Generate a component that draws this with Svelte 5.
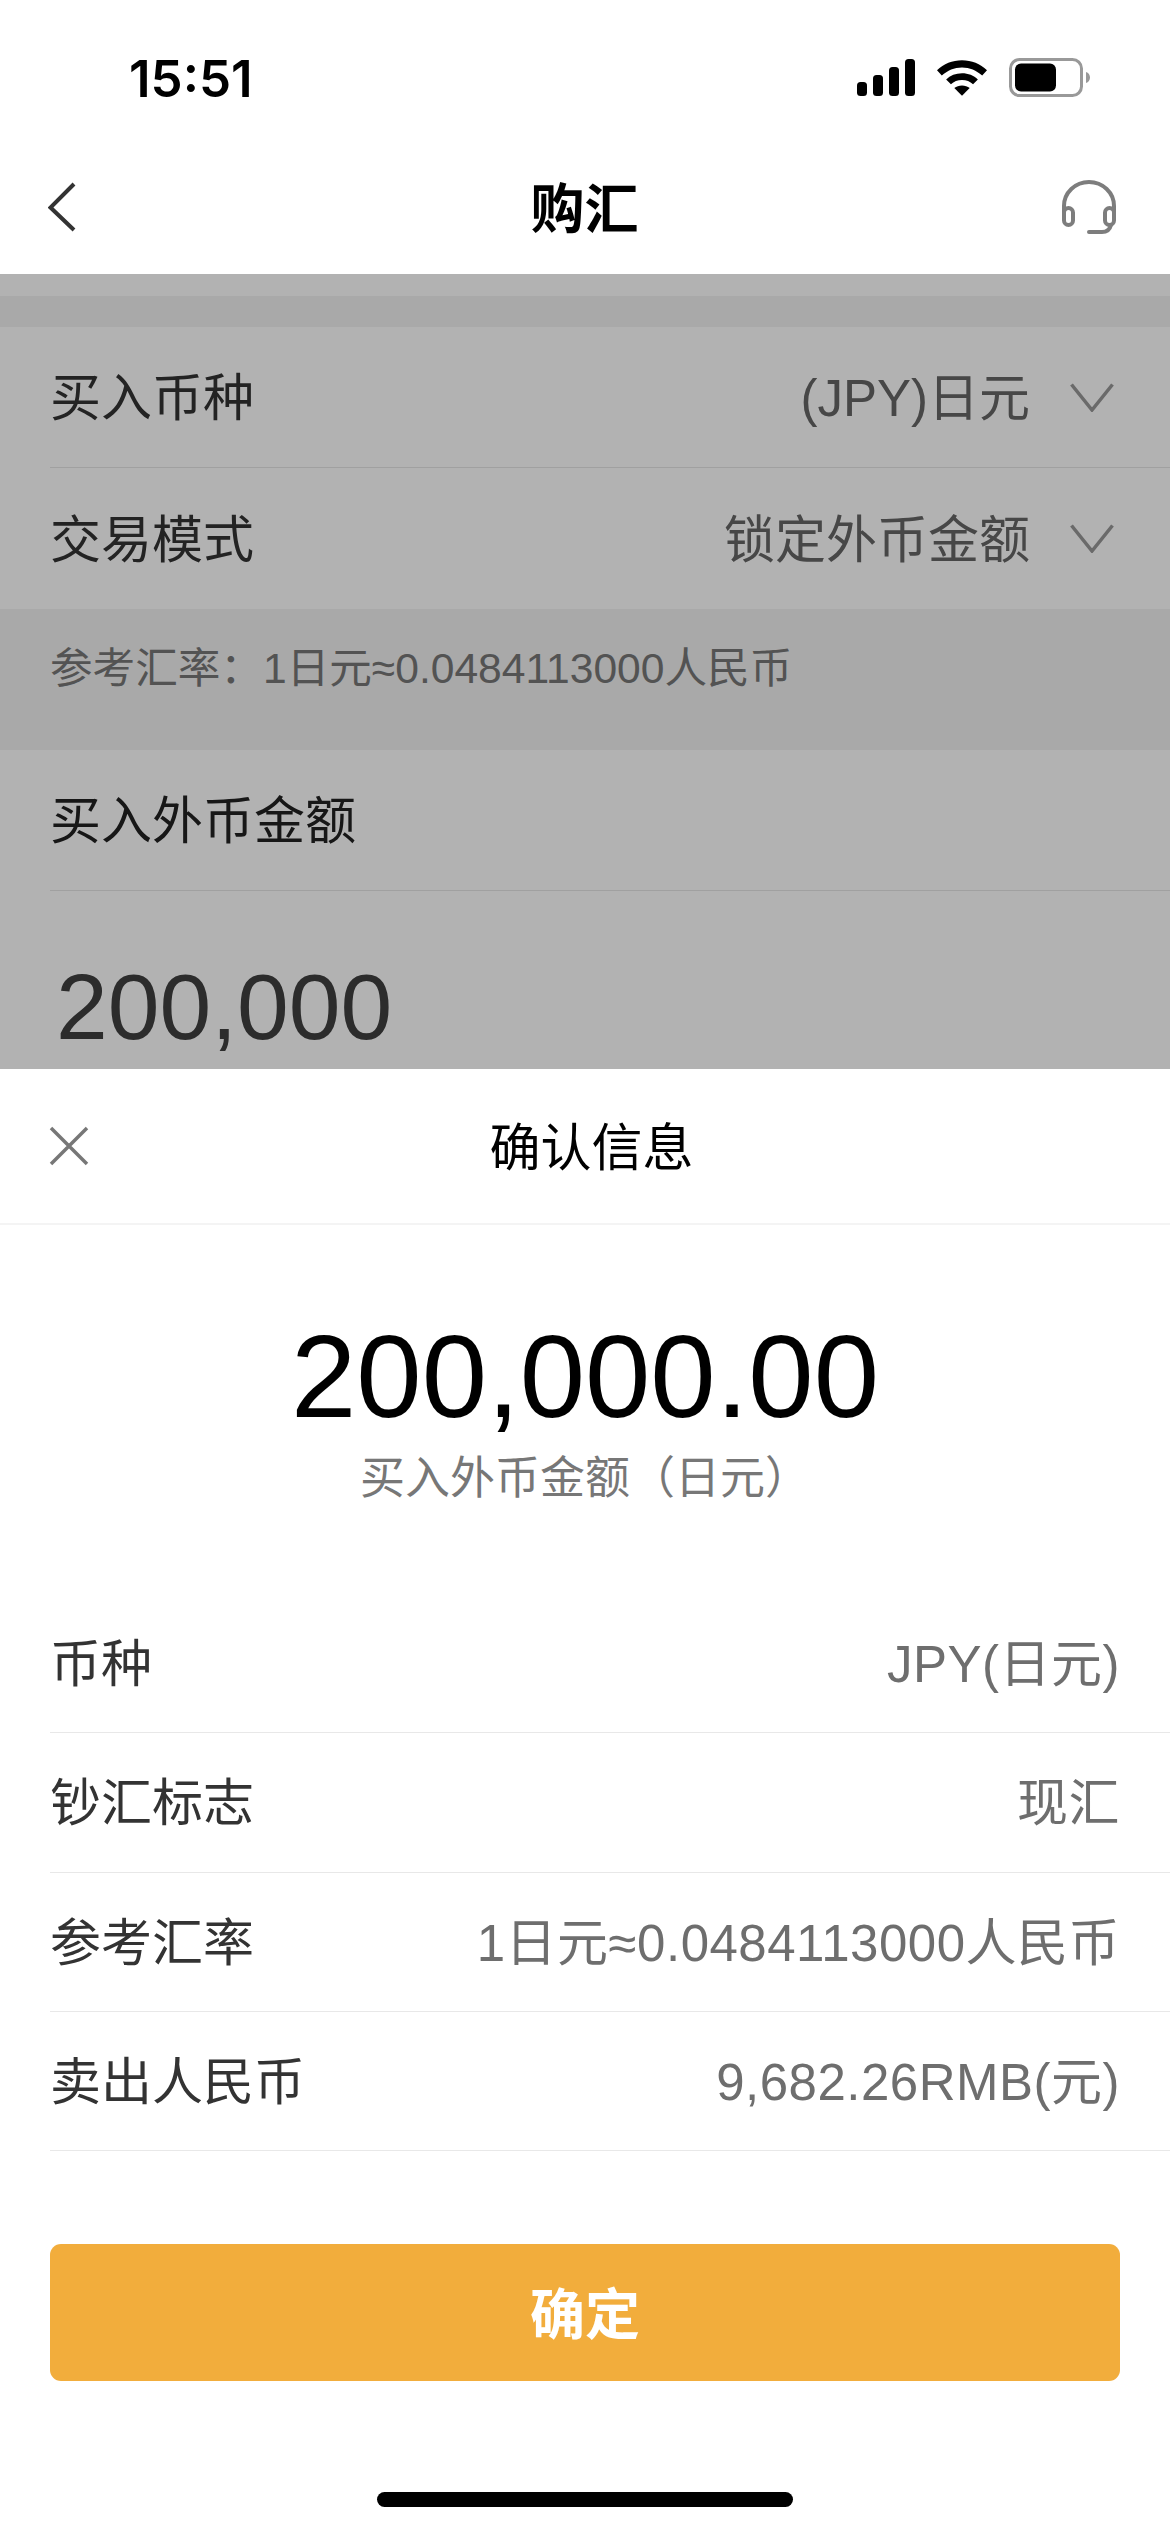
<script>
	const rows = [
		{ label: '币种', value: 'JPY(日元)' },
		{ label: '钞汇标志', value: '现汇' },
		{ label: '参考汇率', value: '1日元≈0.0484113000人民币' },
		{ label: '卖出人民币', value: '9,682.26RMB(元)' }
	]
</script>

<div class="page">
	<div class="status">
		<span class="time">15:51</span>
		<div class="status-icons">
			<svg width="58" height="37" viewBox="0 0 58 37">
				<rect x="0" y="23" width="10" height="14" rx="3.500" />
				<rect x="16" y="16" width="10" height="21" rx="3.500" />
				<rect x="32" y="8" width="10" height="29" rx="3.500" />
				<rect x="48" y="0" width="10" height="37" rx="3.500" />
			</svg>
			<svg width="50" height="37" viewBox="0 0 52 38">
				<path d="M0 11.500C7 4.500 16 1 26 1s19 3.500 26 10.500l-5 5.500C41 11.500 34 8.500 26 8.500S11 11.500 5 17Z" />
				<path d="M9.500 21C13.800 16.800 19.500 14.500 26 14.500S38.200 16.800 42.500 21L37.500 26C34.500 23.300 30.500 21.700 26 21.700S17.500 23.300 14.500 26Z" />
				<path d="M18 30C20.200 28.200 23 27.200 26 27.200S31.800 28.200 34 30L26 38Z" />
			</svg>
			<svg width="82" height="39" viewBox="0 0 82 39">
				<rect x="1.500" y="1.500" width="71" height="36" rx="9" fill="none" stroke="#999" stroke-width="3" />
				<rect x="6" y="5.500" width="41" height="28" rx="6" />
				<path d="M77 14c2.500.8 4 3 4 5.500S79.500 24.200 77 25Z" fill="#999" />
			</svg>
		</div>
	</div>

	<div class="nav">
		<svg class="back" width="28" height="50" viewBox="0 0 28 50">
			<path d="M26 2 2.500 25.500 26 48" />
		</svg>
		<span class="nav-title">购汇</span>
		<svg class="headset" width="56" height="54" viewBox="0 0 56 54">
			<path d="M3 32V26a25 24 0 0 1 50 0v6" />
			<rect x="3" y="28" width="9" height="17" rx="4.500" />
			<rect x="44" y="28" width="9" height="17" rx="4.500" />
			<path d="M28 52h13c5 0 8-3 9-7" />
		</svg>
	</div>

	<div class="behind">
		<div class="gap-top"></div>
		<div class="band"></div>
		<div class="select-row">
			<div class="select-inner">
				<span class="label">买入币种</span>
				<span class="select-value">(JPY)日元</span>
				<svg class="chevron" width="44" height="29" viewBox="0 0 44 29"><path d="M1.500 1.500 22 27 42.500 1.500" /></svg>
			</div>
		</div>
		<div class="select-row">
			<div class="select-inner last">
				<span class="label">交易模式</span>
				<span class="select-value">锁定外币金额</span>
				<svg class="chevron" width="44" height="29" viewBox="0 0 44 29"><path d="M1.500 1.500 22 27 42.500 1.500" /></svg>
			</div>
		</div>
		<div class="rate-band">参考汇率：1日元≈0.0484113000人民币</div>
		<div class="amount-head"><span class="label dark">买入外币金额</span></div>
		<div class="amount">200,000</div>
		<div class="dim"></div>
	</div>

	<div class="sheet">
		<div class="sheet-head">
			<svg class="close" width="40" height="40" viewBox="0 0 40 40"><path d="M2 2l36 36M38 2 2 38" /></svg>
			<span class="sheet-title">确认信息</span>
		</div>
		<div class="total">200,000.00</div>
		<div class="total-label">买入外币金额（日元）</div>
		<div class="rows">
			{#each rows as row}
				<div class="row">
					<span class="label">{row.label}</span>
					<span class="row-value">{row.value}</span>
				</div>
			{/each}
		</div>
		<div class="confirm"><span>确定</span></div>
		<div class="home-wrap"><div class="home"></div></div>
	</div>
</div>

<style>
	:global(body) {
		margin: 0;
		background: #fff;
	}

	.page {
		width: 1170px;
		height: 2532px;
		display: flex;
		flex-direction: column;
		overflow: hidden;
		font-family: 'Liberation Sans', 'Noto Sans CJK SC', sans-serif;
		color: #333;
	}

	.status {
		height: 134px;
		box-sizing: border-box;
		padding: 52px 79px 0 129px;
		display: flex;
		justify-content: space-between;
		align-items: flex-start;
	}

	.time {
		font-family: 'Inter', sans-serif;
		font-size: 51px;
		line-height: 54px;
		font-weight: 600;
		color: #000;
	}

	.status-icons {
		display: flex;
		gap: 22px;
		align-items: center;
		padding-top: 6px;
	}

	.nav {
		height: 140px;
		box-sizing: border-box;
		padding: 6px 53px 0 48px;
		display: grid;
		grid-template-columns: 1fr auto 1fr;
		align-items: center;
	}

	.back path {
		fill: none;
		stroke: #333;
		stroke-width: 4;
	}

	.nav-title {
		font-size: 54px;
		font-weight: 700;
		color: #000;
		margin: 0 0 4px 4px;
	}

	.headset {
		justify-self: end;
		fill: none;
		stroke: #7d7d7d;
		stroke-width: 4;
		stroke-linecap: round;
	}

	.behind {
		position: relative;
		height: 795px;
		overflow: hidden;
		background: #fff;
	}

	.dim {
		position: absolute;
		inset: 0;
		background: rgba(0, 0, 0, 0.3);
	}

	.gap-top {
		height: 22px;
	}

	.band {
		height: 31px;
		background: #f2f2f2;
	}

	.select-row {
		padding-left: 50px;
	}

	.select-inner {
		height: 141px;
		box-sizing: border-box;
		padding-right: 56px;
		display: flex;
		align-items: center;
		border-bottom: 1px solid #e5e5e5;
	}

	.select-inner.last {
		border-bottom: 0;
	}

	.label {
		font-size: 51px;
		flex: 1;
		color: #333;
		padding-bottom: 6px;
	}

	.label.dark {
		color: #222;
	}

	.select-value {
		font-size: 51px;
		color: #666;
		padding-bottom: 6px;
	}

	.chevron {
		margin-left: 40px;
		fill: none;
		stroke: #999;
		stroke-width: 3.500;
	}

	.rate-band {
		height: 141px;
		box-sizing: border-box;
		padding: 31px 50px 0;
		background: #f2f2f2;
		font-size: 42.600px;
		line-height: 56px;
		color: #777;
	}

	.amount-head {
		height: 141px;
		box-sizing: border-box;
		margin-left: 50px;
		display: flex;
		align-items: center;
		border-bottom: 1px solid #e5e5e5;
	}

	.amount {
		padding: 66px 0 0 56px;
		font-size: 93px;
		line-height: 100px;
		color: #404040;
	}

	.sheet {
		flex: 1;
		background: #fff;
		display: flex;
		flex-direction: column;
	}

	.sheet-head {
		position: relative;
		height: 156px;
		box-sizing: border-box;
		border-bottom: 2px solid #f4f4f4;
		display: flex;
		align-items: center;
		justify-content: center;
	}

	.close {
		position: absolute;
		left: 49px;
		top: 57px;
		fill: none;
		stroke: #777;
		stroke-width: 3.500;
	}

	.sheet-title {
		font-size: 51px;
		color: #000;
		margin: 0 0 4px 13px;
	}

	.total {
		margin-top: 87px;
		text-align: center;
		font-size: 117.500px;
		line-height: 130px;
		color: #000;
	}

	.total-label {
		margin-top: 7px;
		text-align: center;
		font-size: 45px;
		line-height: 60px;
		color: #777;
	}

	.rows {
		margin-top: 85px;
		padding-left: 50px;
	}

	.row {
		height: 138.300px;
		padding-right: 50px;
		display: flex;
		align-items: center;
		border-bottom: 1px solid #e8e8e8;
	}

	.row-value {
		font-size: 51px;
		letter-spacing: 0.5px;
		color: #6e6e6e;
		padding-bottom: 6px;
	}

	.confirm {
		margin: 93px 50px 0;
		height: 137px;
		border-radius: 11px;
		background: #f2ad3c;
		color: #fff;
		font-size: 55px;
		font-weight: 700;
		display: flex;
		align-items: center;
		justify-content: center;
	}

	.confirm span {
		padding-bottom: 5px;
	}

	.home-wrap {
		padding-top: 111px;
		display: flex;
		justify-content: center;
	}

	.home {
		width: 416px;
		height: 15px;
		border-radius: 8px;
		background: #000;
	}
</style>
